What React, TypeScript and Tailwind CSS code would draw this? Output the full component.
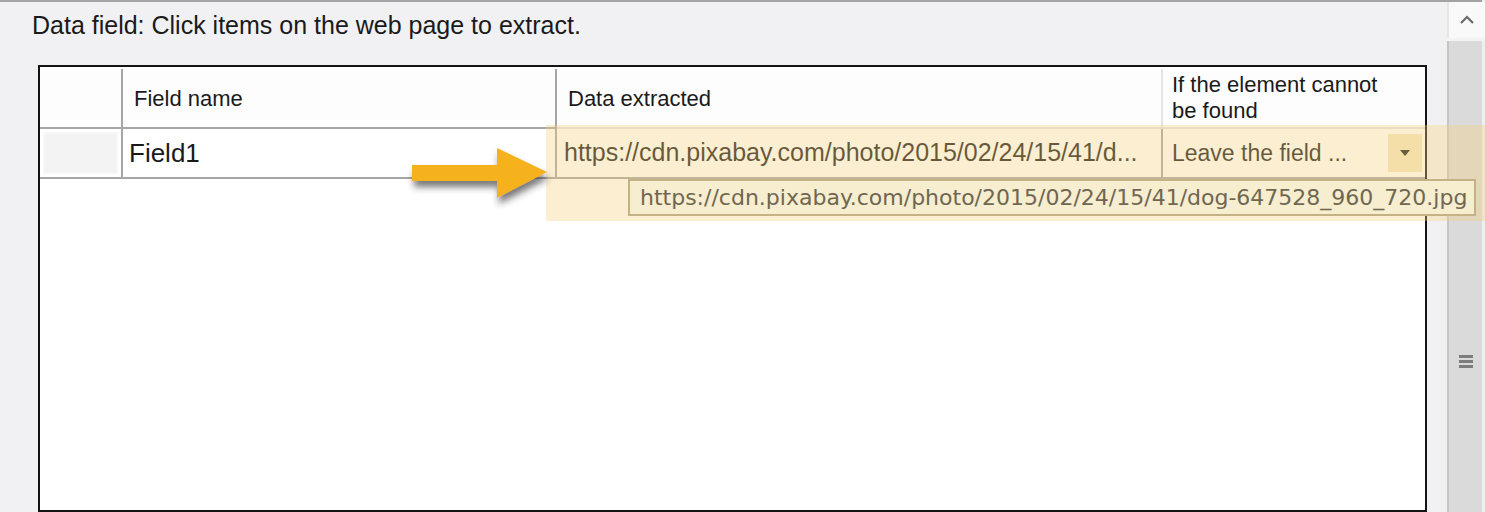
import React from "react";

const URL_TEXT = "https://cdn.pixabay.com/photo/2015/02/24/15/41/dog-647528_960_720.jpg";

function Arrow() {
  return (
    <svg
      className="absolute left-[400px] top-[138px]"
      width="160"
      height="80"
      viewBox="400 138 160 80"
    >
      <defs>
        <filter id="arrowShadow" x="-20%" y="-30%" width="140%" height="170%">
          <feDropShadow dx="2" dy="6" stdDeviation="3.5" floodColor="#333333" floodOpacity="0.65" />
        </filter>
      </defs>
      <polygon
        points="412,165 497,165 497,148 547,172 497,198 497,181 412,181"
        fill="#f6b21b"
        filter="url(#arrowShadow)"
      />
    </svg>
  );
}

function Scrollbar() {
  return (
    <div className="flex w-[38px] flex-col">
      <div className="flex h-[36px] items-center justify-center border-l-2 border-[#e6e6e6] bg-[#f9f9f9]">
        <svg width="16" height="10" viewBox="0 0 16 10">
          <path d="M2 8 L8 2 L14 8" fill="none" stroke="#6a6a6a" strokeWidth="2.2" />
        </svg>
      </div>
      <div className="h-[3px] bg-[#f3f3f3]" />
      <div className="flex flex-1 border-l-2 border-[#c6c6c6]">
        <div className="flex flex-1 justify-center bg-[#dadada] pt-[314px]">
          <div className="flex flex-col gap-[2px]">
            <div className="h-[3px] w-[14px] bg-[#7d7d7d]" />
            <div className="h-[3px] w-[14px] bg-[#7d7d7d]" />
            <div className="h-[3px] w-[14px] bg-[#7d7d7d]" />
          </div>
        </div>
        <div className="w-[3px] bg-[#efefef]" />
      </div>
    </div>
  );
}

export default function App() {
  return (
    <div className="relative h-[512px] w-[1485px] overflow-hidden bg-[#f1f1f3] font-['Liberation_Sans',Arial,sans-serif] text-[#1a1a1a]">
      <div className="h-[2px] w-[1482px] bg-[#a3a3a3]" />
      <div className="flex h-[510px]">
        <div className="flex w-[1447px] flex-col">
          <p className="ml-[32px] mt-[9px] text-[25px] leading-[28px]">
            Data field: Click items on the web page to extract.
          </p>

          <div className="ml-[38px] mt-[26px] w-[1389px] flex-1 border-2 border-[#141414] bg-white">
            <div className="grid grid-cols-[83px_434px_606px_262px] pt-[2px]">
              {/* header row */}
              <div className="h-[60px] border-b-2 border-r-2 border-[#a6a6a6] bg-[#fdfdfd]" />
              <div className="flex h-[60px] items-center border-b-2 border-r-2 border-[#a6a6a6] bg-[#fdfdfd] pl-[11px] text-[22px]">
                Field name
              </div>
              <div className="flex h-[60px] items-center border-b-2 border-r-2 border-[#e4e4e4] bg-[#fdfdfd] pl-[11px] text-[22px]">
                Data extracted
              </div>
              <div className="flex h-[60px] flex-col justify-center border-b-2 border-[#e4e4e4] bg-[#fdfdfd] pl-[9px] text-[22px] leading-[26px]">
                <span>If the element cannot</span>
                <span>be found</span>
              </div>

              {/* data row */}
              <div className="h-[50px] border-b-2 border-r-2 border-[#a6a6a6] bg-white p-[3px]">
                <div className="h-full border-2 border-[#f7f7f7] bg-[#f3f3f3]" />
              </div>
              <div className="flex h-[50px] items-center border-b-2 border-r-2 border-[#a6a6a6] bg-white pl-[6px] text-[26px]">
                Field1
              </div>
              <div className="flex h-[50px] items-center border-b-2 border-r-2 border-[#a6a6a6] bg-white pl-[7px] text-[25px]">
                https://cdn.pixabay.com/photo/2015/02/24/15/41/d...
              </div>
              <div className="flex h-[50px] items-center border-b-2 border-[#a6a6a6] bg-white pl-[9px] pr-[3px] text-[23px]">
                <span className="flex-1">Leave the field ...</span>
                <span className="flex h-[38px] w-[34px] items-center justify-center bg-[#f3e6c2]">
                  <svg width="10" height="6" viewBox="0 0 10 6">
                    <path d="M0 0 H10 L5 6 Z" fill="#1f1f1f" />
                  </svg>
                </span>
              </div>
            </div>
          </div>
        </div>
        <Scrollbar />
      </div>

      {/* selection highlight over the extracted cell */}
      <div className="absolute left-[546px] top-[125px] h-[96px] w-[939px] bg-[#f5d27a]/35" />

      {/* tooltip */}
      <div className="absolute left-[628px] top-[179px] flex h-[37px] w-[848px] items-center border-2 border-[#c4b283] bg-[#f7edcf] pl-[10px] font-['DejaVu_Sans',Verdana,sans-serif] text-[22px] text-[#6f6752]">
        {URL_TEXT}
      </div>

      <Arrow />
    </div>
  );
}
